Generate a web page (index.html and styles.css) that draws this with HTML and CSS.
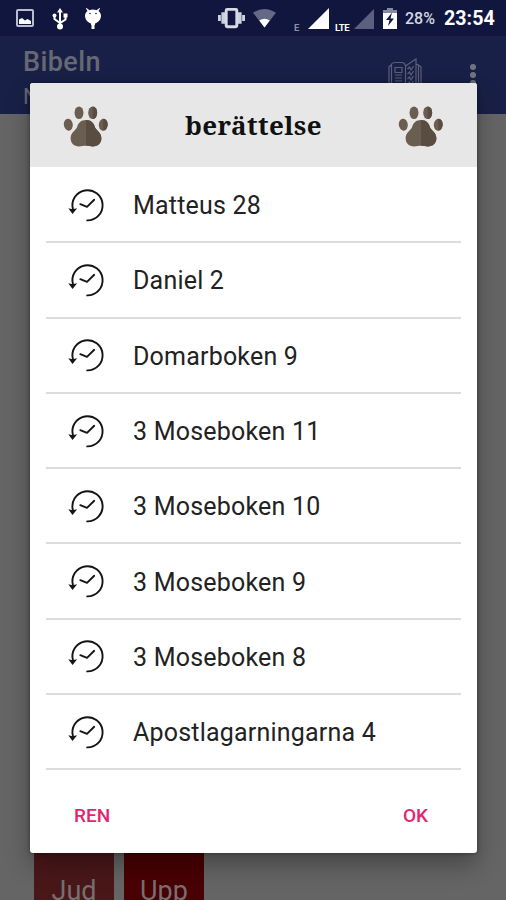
FILE: index.html
```
<!DOCTYPE html>
<html lang="sv">
    <head>
        <meta charset="utf-8">
        <title>Bibeln</title>
        <link rel="stylesheet" href="styles.css">
    </head>
    <body>
        <!-- shared icons -->
        <svg class="sprite">
            <symbol id="paw" viewBox="0 0 48 46">
                <g fill="#6a5d52" stroke="#efe8e0" stroke-width="1.200" paint-order="stroke">
                    <ellipse cx="6.300" cy="22.700" rx="4.500" ry="6" transform="rotate(-8 6.3 22.7)"/>
                    <ellipse cx="17" cy="10.700" rx="4.500" ry="6.300"/>
                    <ellipse cx="30.700" cy="10.700" rx="4.500" ry="6.300"/>
                    <ellipse cx="41.300" cy="22.700" rx="4.500" ry="6" transform="rotate(8 41.3 22.7)"/>
                    <path d="M24 18c-5 0-7.800 2.800-8.800 6.800-.8 3.200-6.600 5.600-6.600 11.400 0 5 3.600 8.200 8.400 8.200 3 0 4.500-.6 7-.6s4 .6 7 .6c4.800 0 8.400-3.200 8.400-8.200 0-5.800-5.800-8.200-6.600-11.400-1-4-3.800-6.800-8.800-6.800z"/>
                </g>
                <path fill="#594c41" d="M24 18c5 0 7.800 2.800 8.800 6.800.8 3.200 6.600 5.600 6.600 11.400 0 5-3.600 8.200-8.400 8.200-3 0-4.500-.6-7-.6zM30.700 4.400c6 0 6 12.600 0 12.600zM41.300 16.700c6 .3 5.500 12 0 12z"/>
            </symbol>
            <symbol id="history" viewBox="0 0 38 36">
                <g fill="none" stroke="#151515" stroke-width="1.900" stroke-linecap="round" stroke-linejoin="round">
                    <path d="M5 22.500A15.100 15.100 0 1 1 19.200 33.400"/>
                    <path d="M12.300 17.200l6.700 2.700 7.200-7.100"/>
                </g>
                <path fill="#151515" d="M.3 21.300l4.200 1 4.700-1-4.700 5.700z"/>
            </symbol>
        </svg>

        <div class="statusbar">
            <svg class="st-image" viewBox="0 0 18 18">
                <rect x="1" y="1" width="16" height="16" rx="1" fill="none" stroke="#b9bdd0" stroke-width="2"/>
                <path fill="#fff" d="M3 15v-4.500l3-1.500 3 2.500 2.500-1.500 3.500 2v3z"/>
            </svg>
            <svg class="st-usb" viewBox="0 0 16 22">
                <g fill="none" stroke="#fff" stroke-width="2"><path d="M8 3v16M2.500 8v3l5.500 4 5.500-3.500V8"/></g>
                <path fill="#fff" d="M8 0l3 4.500H5z"/>
                <circle cx="2.500" cy="7.500" r="2" fill="#fff"/><path fill="#fff" d="M11.500 5.500h4v4h-4z"/><circle cx="8" cy="18.500" r="3" fill="#fff"/>
            </svg>
            <svg class="st-droid" viewBox="0 0 18 22">
                <path fill="#fff" d="M2.500 0l3 2.200Q9 .8 12.500 2.200l3-2.200.6.600L14.500 3c1.700 1.400 2.500 3 2.500 4.800 0 3.600-2.500 6.400-6 7.700v1.500h-.5v4h-3v-4H7v-1.500c-3.500-1.300-6-4.100-6-7.700C1 6 1.800 4.400 3.500 3L1.900.6z"/>
                <circle cx="6" cy="5.500" r=".8" fill="#11173f"/><circle cx="12" cy="5.500" r=".8" fill="#11173f"/>
            </svg>
            <svg class="st-vibrate" viewBox="0 0 28 22">
                <path fill="#ccd0df" d="M0 8h3v6H0zM3.500 5h4v12h-4zM20.500 5h4v12h-4zM25 8h3v6h-3z"/>
                <rect x="8.500" y="2" width="11" height="18" rx="1" fill="#11173f" stroke="#d8dae5" stroke-width="3"/>
            </svg>
            <svg class="st-wifi" viewBox="0 0 24 20">
                <path fill="#646985" d="M0 4.500Q12-3.500 24 4.500L12 20z"/>
                <path fill="#fff" d="M6.500 12.700q5.500-4 11 0L12 20z"/>
            </svg>
            <span class="net net-e">E</span>
            <svg class="st-signal" viewBox="0 0 21 21"><path fill="#fff" d="M21 0v21H0z"/></svg>
            <span class="net net-lte">LTE</span>
            <svg class="st-signal2" viewBox="0 0 20 20"><path fill="#5b607f" d="M20 0v20H0z"/></svg>
            <svg class="st-battery" viewBox="0 0 14 21">
                <path fill="#858aa3" d="M4 0h6v2h4v5H0V2h4z"/>
                <path fill="#fff" d="M0 5h14v16H0z"/>
                <path fill="#11173f" d="M9 4.500L3 12h3.500L5 18l6-7.500H7.500z"/>
            </svg>
            <span class="percent">28%</span>
            <span class="clock">23:54</span>
        </div>

        <div class="appbar">
            <div class="titles">
                <div class="title">Bibeln</div>
                <div class="subtitle">N</div>
            </div>
            <svg class="book" viewBox="0 0 34 32">
                <g fill="none" stroke="#5a607a" stroke-width="1.200">
                    <path d="M1 32V9l2-2M3.500 32V6q1-1.500 4-1.500h7Q17 5 17.500 8v24M17.500 8L28 1v31M28 6l2.500 1v25M33 32V9l-2-1.500"/>
                    <path d="M7 9.500h7v5H7zM7 17h7M7 20h7M7 23h7M7 26h7M19.500 11l2-2 1.500 3 2.500-4M19.500 16l2-2 1.500 3 2.500-4M19.500 21l2-2 1.500 3 2.500-4M19.500 26l2-2 1.500 3 2.500-4"/>
                </g>
            </svg>
            <svg class="more" viewBox="0 0 6 22"><g fill="#707382"><circle cx="3" cy="3" r="3"/><circle cx="3" cy="11" r="3"/><circle cx="3" cy="19" r="3"/></g></svg>
        </div>

        <div class="books">
            <div class="tile jud">Jud</div>
            <div class="tile upp">Upp</div>
        </div>

        <div class="dialog">
            <div class="dialog-head">
                <svg class="paw"><use href="#paw"/></svg>
                <h2>berättelse</h2>
                <svg class="paw"><use href="#paw"/></svg>
            </div>
            <ul class="history">
                <li><svg><use href="#history"/></svg><span>Matteus 28</span></li>
                <li><svg><use href="#history"/></svg><span>Daniel 2</span></li>
                <li><svg><use href="#history"/></svg><span>Domarboken 9</span></li>
                <li><svg><use href="#history"/></svg><span>3 Moseboken 11</span></li>
                <li><svg><use href="#history"/></svg><span>3 Moseboken 10</span></li>
                <li><svg><use href="#history"/></svg><span>3 Moseboken 9</span></li>
                <li><svg><use href="#history"/></svg><span>3 Moseboken 8</span></li>
                <li><svg><use href="#history"/></svg><span>Apostlagarningarna 4</span></li>
            </ul>
            <div class="actions">
                <button>REN</button>
                <button>OK</button>
            </div>
        </div>
    </body>
</html>
```
FILE: styles.css
```
*{
    box-sizing: border-box;
}
body{
    margin: 0;
    height: 900px;
    overflow: hidden;
    position: relative;
    display: flex;
    flex-direction: column;
    background-color: #656565;
    font-family: Roboto, sans-serif;
}
svg{
    display: block;
    flex-shrink: 0;
}
.sprite{
    display: none;
}

/* status bar */
.statusbar{
    height: 36px;
    flex-shrink: 0;
    display: flex;
    align-items: flex-start;
    padding: 8px 0 0 16px;
    background-color: #10163d;
    color: #fff;
}
.st-image{
    width: 18px;
    height: 18px;
    margin-top: 1px;
}
.st-usb{
    width: 16px;
    height: 22px;
    margin-left: 18px;
}
.st-droid{
    width: 18px;
    height: 22px;
    margin-left: 16px;
}
.st-vibrate{
    width: 27px;
    height: 22px;
    margin-left: 116px;
    margin-top: -1px;
}
.st-wifi{
    width: 23px;
    height: 20px;
    margin-left: 8px;
}
.net{
    font-size: 9.5px;
    line-height: 10px;
    font-weight: bold;
    margin-top: 15px;
}
.net-e{
    width: 6px;
    margin-left: 18px;
    color: #8b90a8;
}
.net-lte{
    width: 15px;
    margin-left: 6px;
    letter-spacing: -0.4px;
}
.st-signal{
    width: 21px;
    height: 21px;
    margin-left: 8px;
}
.st-signal2{
    width: 20px;
    height: 20px;
    margin-left: 4px;
    margin-top: 1px;
}
.st-battery{
    width: 14px;
    height: 21px;
    margin-left: 9px;
}
.percent{
    width: 32px;
    margin-left: 8px;
    font-size: 16px;
    line-height: 22px;
    font-weight: 500;
    color: #d5d7e2;
}
.clock{
    margin-left: 7px;
    font-size: 19.7px;
    line-height: 22px;
    font-weight: 700;
}

/* app bar */
.appbar{
    height: 78px;
    flex-shrink: 0;
    display: flex;
    align-items: flex-start;
    padding-left: 23px;
    background-color: #192047;
    color: #666973;
}
.titles{
    width: 365px;
    padding-top: 10px;
}
.title{
    font-size: 27px;
    line-height: 32px;
    font-weight: 500;
    letter-spacing: 0.4px;
}
.subtitle{
    font-size: 22px;
    line-height: 34px;
    margin-top: 2px;
}
.book{
    width: 34px;
    height: 32px;
    margin-top: 22px;
}
.more{
    width: 6px;
    height: 22px;
    margin-left: 48px;
    margin-top: 28px;
}

/* book tiles behind the dialog */
.books{
    margin-top: auto;
    display: flex;
    gap: 10px;
    padding-left: 34px;
}
.tile{
    width: 80px;
    height: 60px;
    padding-top: 35px;
    text-align: center;
    font-size: 27px;
    line-height: 32px;
    color: #777070;
}
.jud{
    background-color: #4a1719;
}
.upp{
    background-color: #490003;
}

/* dialog */
.dialog{
    position: absolute;
    left: 30px;
    top: 83px;
    width: 447px;
    height: 770px;
    display: flex;
    flex-direction: column;
    background-color: #fff;
    border-radius: 3px;
    overflow: hidden;
    box-shadow: 0 12px 24px rgba(0,0,0,0.3), 0 0 4px rgba(0,0,0,0.4);
}
.dialog-head{
    height: 84px;
    flex-shrink: 0;
    display: flex;
    align-items: center;
    justify-content: space-between;
    padding: 0 32px;
    background-color: #e7e7e7;
}
.paw{
    width: 48px;
    height: 46px;
    margin-bottom: 1px;
}
.dialog-head h2{
    margin: 0;
    font-family: "Noto Serif", "DejaVu Serif Condensed", "DejaVu Serif", serif;
    font-size: 26px;
    font-weight: bold;
    letter-spacing: 0.4px;
    color: #111;
}
.history{
    list-style: none;
    margin: 0;
    padding: 1px 16px 0;
}
.history li{
    height: 75.300px;
    display: flex;
    align-items: center;
    padding-left: 22px;
    border-bottom: 2px solid #dcdcdc;
    font-size: 25px;
    letter-spacing: 0.2px;
    color: #222;
}
.history svg{
    width: 38px;
    height: 36px;
    margin-right: 27px;
}
.history span{
    padding-top: 2px;
}
.actions{
    flex: 1;
    display: flex;
    align-items: center;
    justify-content: space-between;
    padding: 7px 49px 0 44px;
}
.actions button{
    border: none;
    background: none;
    padding: 0;
    font-family: Roboto, sans-serif;
    font-size: 19px;
    font-weight: 500;
    color: #e0266f;
}
```
